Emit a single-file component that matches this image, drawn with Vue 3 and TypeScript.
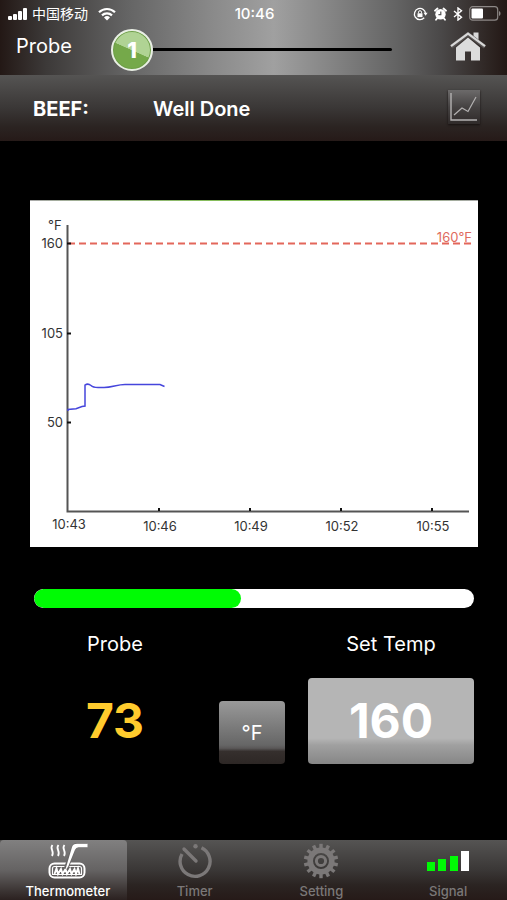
<script setup lang="ts">
import { computed, ref } from 'vue'

type Unit = 'F' | 'C'
type TabId = 'thermometer' | 'timer' | 'setting' | 'signal'

interface Tab {
  id: TabId
  label: string
}

const tabs: Tab[] = [
  { id: 'thermometer', label: 'Thermometer' },
  { id: 'timer', label: 'Timer' },
  { id: 'setting', label: 'Setting' },
  { id: 'signal', label: 'Signal' },
]

const activeTab = ref<TabId>('thermometer')
const unit = ref<Unit>('F')
const probeF = ref(73)
const targetF = ref(160)

const convert = (f: number): number =>
  unit.value === 'F' ? f : Math.round(((f - 32) * 5) / 9)

const probeTemp = computed(() => convert(probeF.value))
const targetTemp = computed(() => convert(targetF.value))
const unitLabel = computed(() => `°${unit.value}`)
const progress = computed(() => Math.round((probeF.value / targetF.value) * 100) + 1)

const yTicks = [
  { value: 160, y: 42 },
  { value: 105, y: 132 },
  { value: 50, y: 221 },
]
const xTicks = [
  { label: '10:43', x: 39, y: 328 },
  { label: '10:46', x: 130, y: 330 },
  { label: '10:49', x: 221, y: 330 },
  { label: '10:52', x: 312, y: 330 },
  { label: '10:55', x: 403, y: 330 },
]
const tickMarks = [129, 220, 311, 402]
const gearTeeth = Array.from({ length: 14 }, (_, i) => (i * 360) / 14)

function toggleUnit(): void {
  unit.value = unit.value === 'F' ? 'C' : 'F'
}
</script>

<template>
  <div class="app">
    <header class="top">
      <div class="status">
        <div class="carrier">
          <svg width="20" height="14" viewBox="0 0 20 14" fill="#fff" aria-hidden="true">
            <rect x="0" y="9" width="4" height="4" rx="1" />
            <rect x="5" y="7" width="4" height="6" rx="1" />
            <rect x="10" y="4" width="4" height="9" rx="1" />
            <rect x="15" y="1" width="4" height="12" rx="1" />
          </svg>
          <span>中国移动</span>
          <svg class="wifi" width="18" height="14" viewBox="0 0 18 14" fill="none" stroke="#fff" stroke-width="2.2" aria-hidden="true">
            <path d="M1 5.2a11.6 11.6 0 0 1 16 0" />
            <path d="M4 8.4a7.3 7.3 0 0 1 10 0" />
            <path d="M9 13.4 6 10.4a4.4 4.4 0 0 1 6 0z" fill="#fff" stroke="none" />
          </svg>
        </div>
        <time class="clock">10:46</time>
        <div class="indicators">
          <svg width="15" height="14" viewBox="0 0 15 14" fill="none" stroke="#fff" stroke-width="1.3" aria-hidden="true">
            <path d="M11.2 10.8A5.6 5.6 0 1 1 12.6 7" />
            <path d="M10.6 5.8h4l-2 2.9z" fill="#fff" stroke="none" />
            <rect x="4.5" y="6.3" width="5" height="3.8" fill="#fff" stroke="none" />
            <path d="M5.5 6.4V5.2a1.5 1.5 0 0 1 3 0v1.2" stroke-width="1" />
          </svg>
          <svg width="13" height="14" viewBox="0 0 13 14" aria-hidden="true">
            <circle cx="6.5" cy="7.3" r="5.2" fill="#fff" />
            <path d="M1 3.700 3.500 1.500M12 3.700 9.500 1.500M3.200 11.200l-1.200 1.600M9.800 11.200l1.200 1.600" stroke="#fff" stroke-width="1.800" stroke-linecap="round" />
            <path d="M6.800 4.400v3.200H4.400" fill="none" stroke="#555" stroke-width="1.200" />
          </svg>
          <svg width="10" height="14" viewBox="0 0 10 14" fill="none" stroke="#fff" stroke-width="1.400" aria-hidden="true">
            <path d="M1 4l7.500 6.200L5 13V1l3.500 2.800L1 10" />
          </svg>
          <svg width="32" height="15" viewBox="0 0 32 15" aria-hidden="true">
            <rect x=".7" y=".7" width="28" height="13.500" rx="3" fill="none" stroke="#8d8886" stroke-width="1.200" />
            <rect x="2.500" y="2.500" width="11.500" height="10" rx="1" fill="#fff" />
            <path d="M30 5v5c2-.8 2-4.200 0-5z" fill="#8d8886" />
          </svg>
        </div>
      </div>

      <div class="probe-row">
        <span class="probe-title">Probe</span>
        <nav class="pager" aria-label="Probes">
          <button class="probe-badge" type="button" aria-label="Probe 1">
            <span>1</span>
          </button>
          <span class="track"></span>
        </nav>
        <a class="home" href="#home" aria-label="Home">
          <svg width="36" height="30" viewBox="0 0 36 30" aria-hidden="true">
            <path d="M23.500.5h5v9.500l-5-4z" fill="#d8d8d8" />
            <path d="M18 5.500 30 15.500v13H21v-9h-6v9H6v-13z" fill="#dcdcdc" />
            <path d="M1 15 18 2 35 15" fill="none" stroke="#5a5655" stroke-width="3.800" />
            <path d="M1 14.200 18 1.700 35 14.200" fill="none" stroke="#d8d8d8" stroke-width="2.200" />
          </svg>
        </a>
      </div>
    </header>

    <section class="recipe">
      <h1 class="meat">BEEF:</h1>
      <span class="doneness">Well Done</span>
      <button class="chart-button" type="button" aria-label="Show chart">
        <svg width="32" height="34" viewBox="0 0 32 34" fill="none" stroke="#b4b2b2" aria-hidden="true">
          <path d="M3 3v27h26" stroke-width="1.400" />
          <path d="M6 25l8-7 6 3.500L28 7" stroke-width="1.200" />
        </svg>
      </button>
    </section>

    <main>
      <figure class="chart">
        <svg viewBox="0 0 448 346" role="img" aria-label="Temperature history">
          <path class="axis" d="M37.500 24V310.500H439" />
          <path v-for="x in tickMarks" :key="x" class="tick" :d="`M${x} 310v-3`" />
          <text x="18" y="29">{{ unitLabel }}</text>
          <text v-for="t in yTicks" :key="t.value" class="y-label" x="33" :y="t.y + 5">{{ convert(t.value) }}</text>
          <text v-for="t in xTicks" :key="t.label" class="x-label" :x="t.x" :y="t.y">{{ t.label }}</text>
          <path class="target" d="M38 42.500H441" />
          <path v-for="t in yTicks" :key="t.value" class="tick" :d="`M37 ${t.y + 0.5}h4`" />
          <text class="target-label" x="442" y="41">{{ targetTemp }}{{ unitLabel }}</text>
          <path class="series" d="M38 210V208.500L46 207.800 52 205.500 55 205V184Q58 182 61 184.500 63 186.500 68 186.500H74C82 186.500 87 183.500 95 183.500H130L134.500 185.500" />
        </svg>
      </figure>

      <div class="progress" role="progressbar" aria-label="Cooking progress" :aria-valuenow="progress" aria-valuemin="0" aria-valuemax="100">
        <div class="progress-fill" :style="{ width: progress + '%' }"></div>
      </div>

      <section class="readings">
        <span class="label">Probe</span>
        <label class="label set-label" for="set-temp">Set Temp</label>
        <output class="current">{{ probeTemp }}</output>
        <button class="unit" type="button" @click="toggleUnit">{{ unitLabel }}</button>
        <button id="set-temp" class="set-temp" type="button">{{ targetTemp }}</button>
      </section>
    </main>

    <nav class="tabs" aria-label="Main">
      <button
        v-for="tab in tabs"
        :key="tab.id"
        class="tab"
        :class="{ active: tab.id === activeTab }"
        type="button"
        @click="activeTab = tab.id"
      >
        <svg v-if="tab.id === 'thermometer'" width="40" height="36" viewBox="0 0 40 36" fill="none" stroke="#fff" aria-hidden="true">
          <path d="M4.500 2c-3.500 4 2.500 6-.5 11M10.500 2c-3.500 4 2.500 6-.5 11M16.500 2c-3.500 4 2.500 6-.5 11" stroke-width="1.800" />
          <rect x="1.500" y="20.500" width="35" height="14" rx="5" stroke-width="2" />
          <path d="M4.500 31.500V25.500q0-2 2-2H31.500q2 0 2 2v6z" stroke-width="1.200" />
          <path d="M6.500 31l2-5.500L10 31l3-5 1.500 5 3-5 1.500 5 3-5 1.500 5 3-5 1.500 5 2-5.500 1.500 5.500" stroke-width="1.900" />
          <path d="M18 26 25.500 5Q26.500 2.200 29.500 2.200h9.500" stroke="#686666" stroke-width="4.600" />
          <path d="M39.500.8H29q-4 0-5 3.200L17 28l3.200-4.500L27 6.800q1-2.500 3.500-2.500h9z" fill="#fff" stroke="none" />
        </svg>
        <svg v-else-if="tab.id === 'timer'" width="36" height="36" viewBox="0 0 36 36" fill="none" stroke="#7b7878" aria-hidden="true">
          <path d="M24.500 4.800A15 15 0 1 1 5 11" stroke-width="3.400" />
          <path d="M7 6 19 18" stroke-width="3.400" stroke-linecap="round" />
          <circle cx="18.500" cy="3.300" r="2.200" fill="#7b7878" stroke="none" />
        </svg>
        <svg v-else-if="tab.id === 'setting'" width="36" height="36" viewBox="0 0 36 36" fill="none" stroke="#7b7878" aria-hidden="true">
          <rect v-for="a in gearTeeth" :key="a" x="16.300" y=".8" width="3.400" height="6" fill="#7b7878" stroke="none" :transform="`rotate(${a} 18 18)`" />
          <circle cx="18" cy="18" r="10.800" stroke-width="5.600" />
          <circle cx="18" cy="18" r="4.600" stroke-width="3" />
        </svg>
        <svg v-else width="44" height="36" viewBox="0 0 44 36" aria-hidden="true">
          <g fill="#00fa05">
            <rect x="1" y="19" width="8" height="9" />
            <rect x="12" y="16" width="8" height="12" />
            <rect x="24" y="13" width="8" height="15" />
          </g>
          <rect x="35" y="8" width="8" height="20" fill="#fff" />
        </svg>
        <span>{{ tab.label }}</span>
      </button>
    </nav>
  </div>
</template>

<style>
body {
  margin: 0;
  background: #000;
}
</style>

<style scoped>
* {
  box-sizing: border-box;
}

.app {
  display: flex;
  flex-direction: column;
  min-height: 100vh;
  background: #000;
  color: #fff;
  font-family: Inter, 'Noto Sans CJK SC', sans-serif;
}

button {
  padding: 0;
  border: 0;
  background: none;
  color: inherit;
  font-family: inherit;
  cursor: pointer;
}

svg {
  display: block;
}

.top {
  height: 75px;
  background: linear-gradient(90deg, #231815 0%, #3c3938 9%, #646464 25%, #8a8a8a 42%, #a0a0a0 54%, #858585 65%, #646464 78%, #4a4848 87%, #231815 100%);
}

.status {
  display: grid;
  grid-template-columns: 1fr auto 1fr;
  align-items: center;
  height: 27px;
  padding: 0 6px 0 8px;
  font-size: 14px;
}

.carrier,
.indicators {
  display: flex;
  align-items: center;
}

.carrier {
  gap: 4px;
}

.carrier span {
  line-height: 20px;
}

.wifi {
  margin-left: 6px;
}

.clock {
  font-size: 15px;
  font-weight: 500;
}

.indicators {
  justify-content: flex-end;
  gap: 6px;
}

.probe-row {
  display: flex;
  align-items: center;
  height: 45px;
  padding: 0 21px 0 16px;
  font-size: 20px;
}

.probe-title {
  flex: 0 0 95px;
  padding-bottom: 8px;
}

.pager {
  display: flex;
  flex: 1;
  align-items: center;
  margin-right: 58px;
}

.probe-badge {
  flex: none;
  width: 42px;
  height: 42px;
  border: 2px solid #e9efe5;
  border-radius: 50%;
  background: linear-gradient(204deg, #b0d394 0 50%, #75a94a 51%);
  box-shadow: inset 0 0 0 1px #6d9d48;
  font-size: 22px;
  font-weight: 800;
}

.track {
  flex: 1;
  height: 3px;
  border-radius: 0 2px 2px 0;
  background: #000;
}

.home {
  padding-bottom: 6px;
}

.recipe {
  display: flex;
  align-items: center;
  height: 66px;
  padding: 2px 27px 0 33px;
  background: linear-gradient(#555453, #3a3736 50%, #2b2422 78%, #261a18);
  font-size: 20px;
  font-weight: 600;
}

.meat {
  flex: 0 0 120px;
  margin: 0;
  font-size: 20px;
  font-weight: 700;
}

.doneness {
  flex: 1;
}

.chart-button {
  margin-bottom: 4px;
  background: linear-gradient(#6c6a6a, #454242 50%, #2f2a29);
  box-shadow: 0 1px 2px #171110;
}

main {
  padding: 59px 33px 0 34px;
}

.chart {
  margin: 0 -4px;
  padding-top: 1px;
  background:
    linear-gradient(90deg, #aaa, #86bd5b 40%, #86bd5b 65%, #aaa) top / 100% 1px no-repeat,
    #fff;
}

.chart svg {
  width: 100%;
  height: auto;
}

.chart text {
  fill: #333;
  font-size: 13px;
}

.chart .y-label,
.chart .target-label {
  text-anchor: end;
}

.chart .x-label {
  text-anchor: middle;
}

.chart .target-label {
  fill: #e06a5e;
}

.axis {
  fill: none;
  stroke: #555;
  stroke-width: 2;
}

.tick {
  stroke: #111;
  stroke-width: 2;
}

.target {
  stroke: #e3675b;
  stroke-width: 2;
  stroke-dasharray: 7 4;
}

.series {
  fill: none;
  stroke: #4646dc;
  stroke-width: 1.5;
}

.progress {
  height: 19px;
  margin-top: 42px;
  overflow: hidden;
  border-radius: 10px;
  background: #fff;
}

.progress-fill {
  height: 100%;
  border-radius: 10px;
  background: #00fb04;
}

.readings {
  display: grid;
  grid-template-columns: 1fr 66px 166px;
  column-gap: 23px;
  align-items: end;
  margin-top: 24px;
}

.label {
  font-size: 20px;
  line-height: 24px;
  text-align: center;
}

.set-label {
  grid-column: 3;
}

.current,
.set-temp {
  height: 86px;
  margin-top: 22px;
  font-size: 48px;
  font-weight: 700;
  line-height: 86px;
  text-align: center;
}

.current {
  color: #ffcb2d;
}

.unit {
  height: 63px;
  border-radius: 4px;
  background: linear-gradient(#999, #666 70%, #5a5858 75%, #352f2d 80%, #2d2725);
  font-size: 20px;
}

.set-temp {
  border-radius: 4px;
  background: linear-gradient(#b5b5b5 0 70%, #a0a0a0 78%, #868686);
}

.tabs {
  display: grid;
  grid-template-columns: repeat(4, 1fr);
  height: 60px;
  margin-top: auto;
  background: linear-gradient(#555453, #3a3736 50%, #2b2422 75%, #261a18);
}

.tab {
  display: flex;
  flex-direction: column;
  align-items: center;
  gap: 3px;
  padding: 3px 0 0 9px;
  border-radius: 4px 4px 0 0;
  color: #7b7878;
  font-size: 13px;
  font-weight: 500;
  line-height: 18px;
}

.tab.active {
  background: linear-gradient(#818080, #656363 50%, #3b3433 85%, #2b2120);
  color: #fff;
}
</style>
